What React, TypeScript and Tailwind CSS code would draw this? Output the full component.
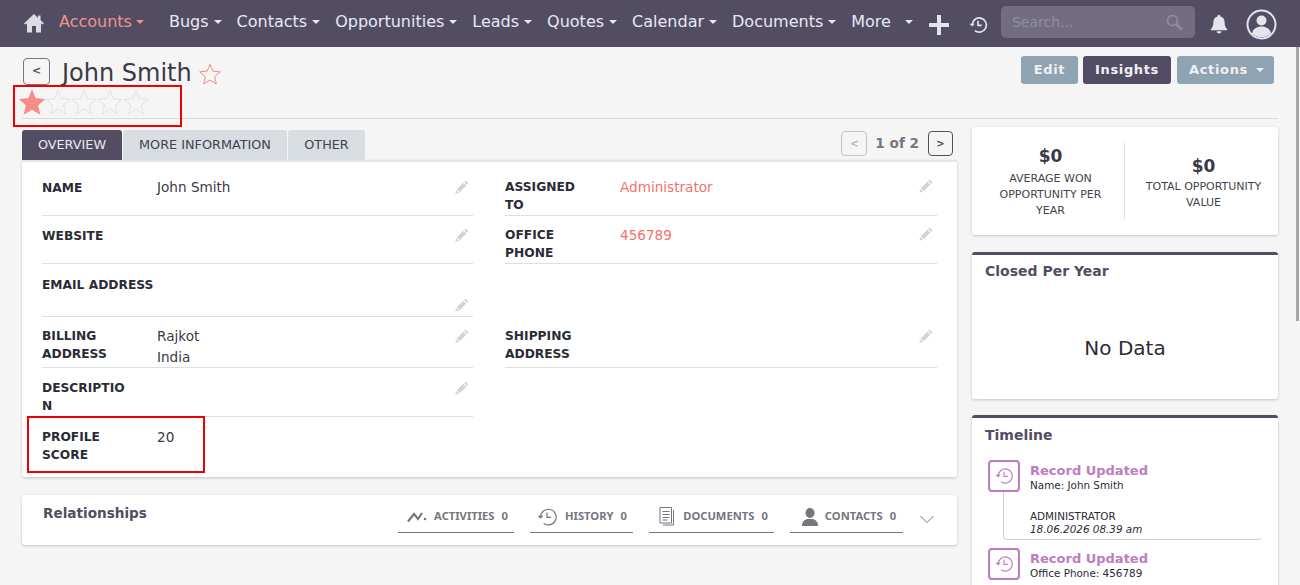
import React from 'react';

const navItems = ['Bugs', 'Contacts', 'Opportunities', 'Leads', 'Quotes', 'Calendar', 'Documents'];

const Caret = ({ className }: { className: string }) => (
  <span className={`inline-block w-0 h-0 border-x-[4px] border-x-transparent border-t-[4px] ${className}`} />
);

const Star = ({ fill, stroke, size }: { fill: string; stroke: string; size: number }) => (
  <svg width={size} height={size} viewBox="0 0 24 24" className="shrink-0">
    <polygon
      points="12,1.5 15.1,8.9 23.2,9.6 17.1,14.9 18.9,22.8 12,18.6 5.1,22.8 6.9,14.9 0.8,9.6 8.9,8.9"
      fill={fill}
      stroke={stroke}
      strokeWidth="1"
    />
  </svg>
);

const HistoryIcon = ({ size, color, width = 2 }: { size: number; color: string; width?: number }) => (
  <svg width={size} height={size} viewBox="0 0 24 24" fill="none" stroke={color} strokeWidth={width}>
    <path d="M5 12a8.5 8.5 0 1 1 3.2 6.7" />
    <path d="M1.8 10.5 5 13.8l3.2-3.3" fill={color} stroke="none" />
    <path d="M12 7v5.5h4.5" />
  </svg>
);

const Pencil = () => (
  <svg width="14" height="14" viewBox="0 0 16 16" fill="#d0d5da">
    <path d="M12 .6 15.400 4 13.800 5.600 10.400 2.200z" />
    <path d="M9.500 3.100 12.900 6.500 5.400 14 2 10.600z" />
    <path d="M1.400 11.400 4.600 14.600 0.300 15.700z" />
  </svg>
);

const Row = ({
  label,
  value,
  cls,
  link,
  bare,
  pencilBottom,
  pencilLow,
  noPencil,
}: {
  label: React.ReactNode;
  value?: React.ReactNode;
  cls: string;
  link?: boolean;
  bare?: boolean;
  pencilBottom?: boolean;
  pencilLow?: boolean;
  noPencil?: boolean;
}) => (
  <div className={`flex ${cls} ${bare ? '' : 'border-b border-[#dcdfe3]'}`}>
    <div className="w-[115px] shrink-0 text-[12.25px] leading-[18px] font-bold text-[#2b2b36]">{label}</div>
    <div className={`flex-1 text-[13.6px] leading-[21px] -mt-[1px] ${link ? 'text-[#f0736a]' : 'text-[#3a3a44]'}`}>{value}</div>
    {!noPencil && (
      <div className={`w-[18px] flex ${pencilBottom ? 'items-end pb-[4px] -mt-[20px]' : pencilLow ? 'pt-[2px]' : 'pt-[1px]'}`}>
        <Pencil />
      </div>
    )}
  </div>
);

const RelTab = ({ icon, label, w }: { icon: React.ReactNode; label: string; w: string }) => (
  <div className={`${w} h-[38px] pt-[6px] border-b border-[#77757f] flex items-center justify-center gap-[7px] text-[11.2px] font-bold text-[#77757f] font-['Noto_Sans',sans-serif]`}>
    {icon}
    <span>{label}</span>
    <span>0</span>
  </div>
);

const TimelineItem = ({ line, who }: { line: string; who?: boolean }) => (
  <div className="relative flex">
    <div className="w-[32px] h-[32px] border-2 border-[#c07cc0] rounded-[4px] flex items-center justify-center shrink-0 bg-white">
      <HistoryIcon size={20} color="#c07cc0" width={1.4} />
    </div>
    <div className="ml-[10px] flex-1">
      <div className="text-[13px] leading-[16px] font-bold text-[#c07cc0] pt-[3px]">Record Updated</div>
      <div className="text-[10.4px] leading-[14px] text-[#2b2b36] -mt-[1px]">{line}</div>
      {who && (
        <>
          <div className="text-[10.4px] leading-[14px] text-[#2b2b36] mt-[17px]">ADMINISTRATOR</div>
          <div className="text-[10.4px] leading-[13px] italic text-[#2b2b36]">18.06.2026 08.39 am</div>
        </>
      )}
    </div>
  </div>
);

export default function App() {
  return (
    <div className="relative w-[1300px] h-[585px] overflow-hidden bg-[#f5f5f5] font-['DejaVu_Sans',sans-serif]">
      {/* top nav */}
      <div className="h-[47px] bg-[#534d64] flex items-center pl-[24px] text-[16px] text-[#e8e8f2]">
        <svg width="20" height="20" viewBox="0 0 20 20" fill="#dcdce4" className="shrink-0 -mt-[2px]">
          <path d="M10 1 0 10.4 1.4 11.6 3 10.2V19.5H8V13H12V19.5H17V10.2L18.6 11.6 20 10.4 16.5 7.1V2.5H14V4.8z" />
        </svg>
        <span className="ml-[15px] -mt-[4px] text-[#f0938a]">Accounts</span>
        <Caret className="ml-[4px] -mt-[3px] border-t-[#f0938a]" />
        <div className="ml-[25px] -mt-[4px] flex items-center gap-[15px]">
          {navItems.map((n) => (
            <div key={n} className="flex items-center">
              <span>{n}</span>
              <Caret className="ml-[5px] mt-[1px] border-t-[#e8e8f2]" />
            </div>
          ))}
        </div>
        <span className="ml-[15px] -mt-[4px]">More</span>
        <Caret className="ml-[14px] -mt-[3px] border-t-[#e8e8f2]" />
        <svg width="20" height="20" viewBox="0 0 20 20" fill="#e4e4ec" className="ml-[16px] shrink-0 mt-[3px]">
          <path d="M8 0h4v8h8v4h-8v8H8v-8H0V8h8z" />
        </svg>
        <div className="ml-[19px] mt-[3px] shrink-0">
          <HistoryIcon size={20} color="#e4e4ec" />
        </div>
        <div className="ml-[13px] w-[194px] h-[32px] -mt-[3px] rounded-[5px] bg-[#726d80] flex items-center justify-between pl-[11px] pr-[12px] text-[14px] text-[#928ea0] shrink-0">
          <span>Search...</span>
          <svg width="17" height="17" viewBox="0 0 17 17" fill="none" stroke="#928ea0" strokeWidth="1.6">
            <circle cx="6.5" cy="6.5" r="5" />
            <path d="m10.5 10.5 5.5 5" strokeWidth="2.4" />
          </svg>
        </div>
        <svg width="20" height="20" viewBox="0 0 20 20" fill="#e4e4ec" className="ml-[14px] shrink-0 mt-[1px]">
          <path d="M10 .8a1.5 1.5 0 0 0-1.5 1.6C5.8 3.1 4.4 5.4 4.4 8c0 3.6-.9 5.6-2.6 7.2v1h16.400v-1C16.500 13.600 15.600 11.600 15.600 8c0-2.600-1.400-4.900-4.100-5.600A1.500 1.500 0 0 0 10 .8zM7.600 17.200a2.400 2.400 0 0 0 4.800 0z" />
        </svg>
        <svg width="31" height="31" viewBox="0 0 31 31" className="ml-[17px] shrink-0 mt-[1px]">
          <circle cx="15.500" cy="15.500" r="14" fill="none" stroke="#e4e4ec" strokeWidth="2" />
          <circle cx="15.500" cy="11.500" r="5" fill="#e4e4ec" />
          <path d="M6 24.500c1-5 5-7 9.500-7s8.500 2 9.500 7a14 14 0 0 1-19 0z" fill="#e4e4ec" />
        </svg>
      </div>

      <div className="px-[22px]">
        {/* title */}
        <div className="h-[72px] border-b border-[#dcdcdc] relative flex">
          <div className="flex-1">
            <div className="flex items-center pl-[1px] pt-[6px]">
              <div className="w-[27px] h-[27px] border border-[#77757f] rounded-[4px] flex items-center justify-center text-[11px] text-[#55505f] font-bold bg-[#f5f5f5]">&lt;</div>
              <span className="ml-[12px] text-[24px] leading-[34px] text-[#3a3a44] mt-[3px]">John Smith</span>
              <div className="ml-[7px] mt-[4px]">
                <Star fill="none" stroke="#f4807a" size={22} />
              </div>
            </div>
            <div className="flex -ml-[3px] -mt-[1px]">
              <Star fill="#f98a8a" stroke="#f98a8a" size={26} />
              {[0, 1, 2, 3].map((i) => (
                <Star key={i} fill="none" stroke="#e2e5e8" size={26} />
              ))}
            </div>
          </div>
          <div className="flex pt-[9px] pr-[4px] gap-[5px] text-[13px] font-bold tracking-[0.65px] text-[#f0f0f4]">
            <div className="w-[57px] h-[28px] rounded-[3px] bg-[#8fa3b2] flex items-center justify-center">Edit</div>
            <div className="w-[88px] h-[28px] rounded-[3px] bg-[#534d64] flex items-center justify-center">Insights</div>
            <div className="w-[97px] h-[28px] ml-[1px] pl-[2px] rounded-[3px] bg-[#8fa3b2] flex items-center justify-center gap-[8px]">
              Actions
              <Caret className="border-x-[3px] border-t-[3px] border-t-[#f0f0f4]" />
            </div>
          </div>
        </div>

        <div className="flex gap-[15px] pt-[6px] items-start">
          {/* left column */}
          <div className="w-[935px] shrink-0">
            <div className="flex h-[35px] items-end">
              <div className="w-[100px] h-[30px] bg-[#534d64] rounded-t-[3px] flex items-center justify-center text-[12.8px] text-[#e8e8f2]">OVERVIEW</div>
              <div className="ml-[1px] w-[164px] h-[30px] bg-[#d8dde1] rounded-t-[3px] flex items-center justify-center text-[12.8px] text-[#44424e]">MORE INFORMATION</div>
              <div className="ml-[1px] w-[77px] h-[30px] bg-[#d8dde1] rounded-t-[3px] flex items-center justify-center text-[12.8px] text-[#44424e]">OTHER</div>
              <div className="ml-auto flex items-center self-start mt-[6px] pr-[4px]">
                <div className="w-[26px] h-[25px] border border-[#c4c4c4] rounded-[4px] flex items-center justify-center text-[10px] text-[#b5b5b5] font-bold">&lt;</div>
                <span className="ml-[8px] mr-[9px] text-[13.6px] font-bold text-[#77757f]">1 of 2</span>
                <div className="w-[25px] h-[25px] border border-[#55505f] rounded-[4px] flex items-center justify-center text-[10px] text-[#55505f] font-bold">&gt;</div>
              </div>
            </div>
            <div className="h-[317px] bg-white border-t-2 border-[#e1e5ea] rounded-b-[3px] shadow-[0_1px_3px_rgba(0,0,0,0.2)] px-[20px] pt-[5px] grid grid-cols-[431px_1fr] gap-x-[32px]">
              <div>
                <Row cls="h-[49px] pt-[12px]" label="NAME" value={<span className="block -mt-[1px]">John Smith</span>} />
                <Row cls="h-[48px] pt-[11px]" label="WEBSITE" />
                <Row cls="h-[53px] pt-[12px]" label={<span className="whitespace-nowrap">EMAIL ADDRESS</span>} pencilBottom />
                <Row cls="h-[51px] pt-[10px]" label={<>BILLING<br />ADDRESS</>} value={<>Rajkot<br />India</>} pencilLow />
                <Row cls="h-[49px] pt-[11px]" label={<>DESCRIPTIO<br />N</>} pencilLow />
                <Row cls="h-[58px] pt-[11px]" label={<>PROFILE<br />SCORE</>} value="20" bare noPencil />
              </div>
              <div>
                <Row cls="h-[49px] pt-[11px]" label={<>ASSIGNED<br />TO</>} value="Administrator" link />
                <Row cls="h-[48px] pt-[10px]" label={<>OFFICE<br />PHONE</>} value="456789" link />
                <div className="h-[53px]" />
                <Row cls="h-[51px] pt-[10px]" label={<>SHIPPING<br />ADDRESS</>} pencilLow />
              </div>
            </div>

            {/* relationships */}
            <div className="mt-[18px] h-[50px] bg-white rounded-[3px] shadow-[0_1px_3px_rgba(0,0,0,0.2)] flex items-start pl-[21px]">
              <div className="pt-[8px] text-[13.6px] font-bold text-[#534d64]">Relationships</div>
              <div className="ml-auto flex gap-[16px] pr-[54px]">
                <RelTab
                  w="w-[116px] pl-[3px]"
                  label="ACTIVITIES"
                  icon={
                    <svg width="20" height="12" viewBox="0 0 20 12" fill="none" stroke="#77757f" strokeWidth="2.200">
                      <path d="M1 10.500 7 3l4 5 4-6" />
                      <circle cx="18" cy="8" r="1.300" fill="#77757f" stroke="none" />
                    </svg>
                  }
                />
                <RelTab w="w-[103px]" label="HISTORY" icon={<HistoryIcon size={22} color="#77757f" width={1.300} />} />
                <RelTab
                  w="w-[125px] pl-[4px]"
                  label="DOCUMENTS"
                  icon={
                    <svg width="17" height="19" viewBox="0 0 17 19" fill="none" stroke="#77757f" strokeWidth="1">
                      <path d="M1 .5h11.500v15.500H1z" />
                      <path d="M14.500 3v15H4" />
                      <path d="M3.500 4.500h7M3.500 7.500h7M3.500 10.500h7M3.500 13h5" />
                    </svg>
                  }
                />
                <RelTab
                  w="w-[113px] pl-[5px]"
                  label="CONTACTS"
                  icon={
                    <svg width="16" height="18" viewBox="0 0 16 18" fill="#77757f">
                      <ellipse cx="8" cy="5" rx="4.500" ry="5" />
                      <path d="M0 18c0-4 2-6 5-7h6c3 1 5 3 5 7z" />
                    </svg>
                  }
                />
              </div>
              <svg width="16" height="9" viewBox="0 0 16 9" fill="none" stroke="#77757f" strokeWidth="1" className="absolute left-[919px] top-[515px]">
                <path d="M1.500 1 8 7.500 14.500 1" />
              </svg>
            </div>
          </div>

          {/* right column */}
          <div className="flex-1 mt-[2px]">
            <div className="h-[108px] bg-white rounded-[3px] shadow-[0_1px_3px_rgba(0,0,0,0.2)] flex items-start pl-[15px] pt-[17px]">
              <div className="w-[137px] pr-[10px] text-center">
                <div className="text-[17px] leading-[24px] font-bold text-[#3a3a44]">$0</div>
                <div className="text-[11px] leading-[16px] text-[#44424e] mt-[3px]">AVERAGE WON OPPORTUNITY PER YEAR</div>
              </div>
              <div className="w-px h-[76px] -mt-[1px] bg-[#dcdfe3]" />
              <div className="flex-1 text-center pt-[10px] pl-[4px]">
                <div className="text-[17px] leading-[24px] font-bold text-[#3a3a44]">$0</div>
                <div className="text-[11px] leading-[16px] text-[#44424e] mt-[1px] px-[8px]">TOTAL OPPORTUNITY VALUE</div>
              </div>
            </div>
            <div className="mt-[17px] h-[147px] bg-white rounded-[3px] border-t-[3px] border-[#534d64] shadow-[0_1px_3px_rgba(0,0,0,0.2)] px-[13px] pt-[6px]">
              <div className="text-[14px] leading-[20px] font-bold text-[#534d64]">Closed Per Year</div>
              <div className="mt-[52px] text-center text-[20px] leading-[30px] text-[#2b2b36]">No Data</div>
            </div>
            <div className="mt-[16px] h-[300px] bg-white rounded-[3px] border-t-[3px] border-[#534d64] shadow-[0_1px_3px_rgba(0,0,0,0.2)] px-[13px] pt-[7px]">
              <div className="text-[14px] leading-[20px] font-bold text-[#534d64] mb-[15px]">Timeline</div>
              <div className="ml-[3px] mr-[3px]">
                <div className="relative pb-[3px] mb-[8px] border-b border-l border-[#d0d0d0] rounded-bl-[4px] rounded-br-[4px] ml-[15px]">
                  <div className="-ml-[16px]">
                    <TimelineItem line="Name: John Smith" who />
                  </div>
                </div>
                <TimelineItem line="Office Phone: 456789" />
              </div>
            </div>
          </div>
        </div>
      </div>

      {/* annotation boxes */}
      <div className="absolute left-[13px] top-[85px] w-[169px] h-[42px] border-[2px] border-[#f00000]" />
      <div className="absolute left-[27px] top-[416px] w-[178px] h-[57px] border-[2px] border-[#f00000]" />
      {/* scrollbar */}
      <div className="absolute right-[1px] top-[47px] w-[3px] h-[274px] bg-[#a8a8a8]" />
    </div>
  );
}
